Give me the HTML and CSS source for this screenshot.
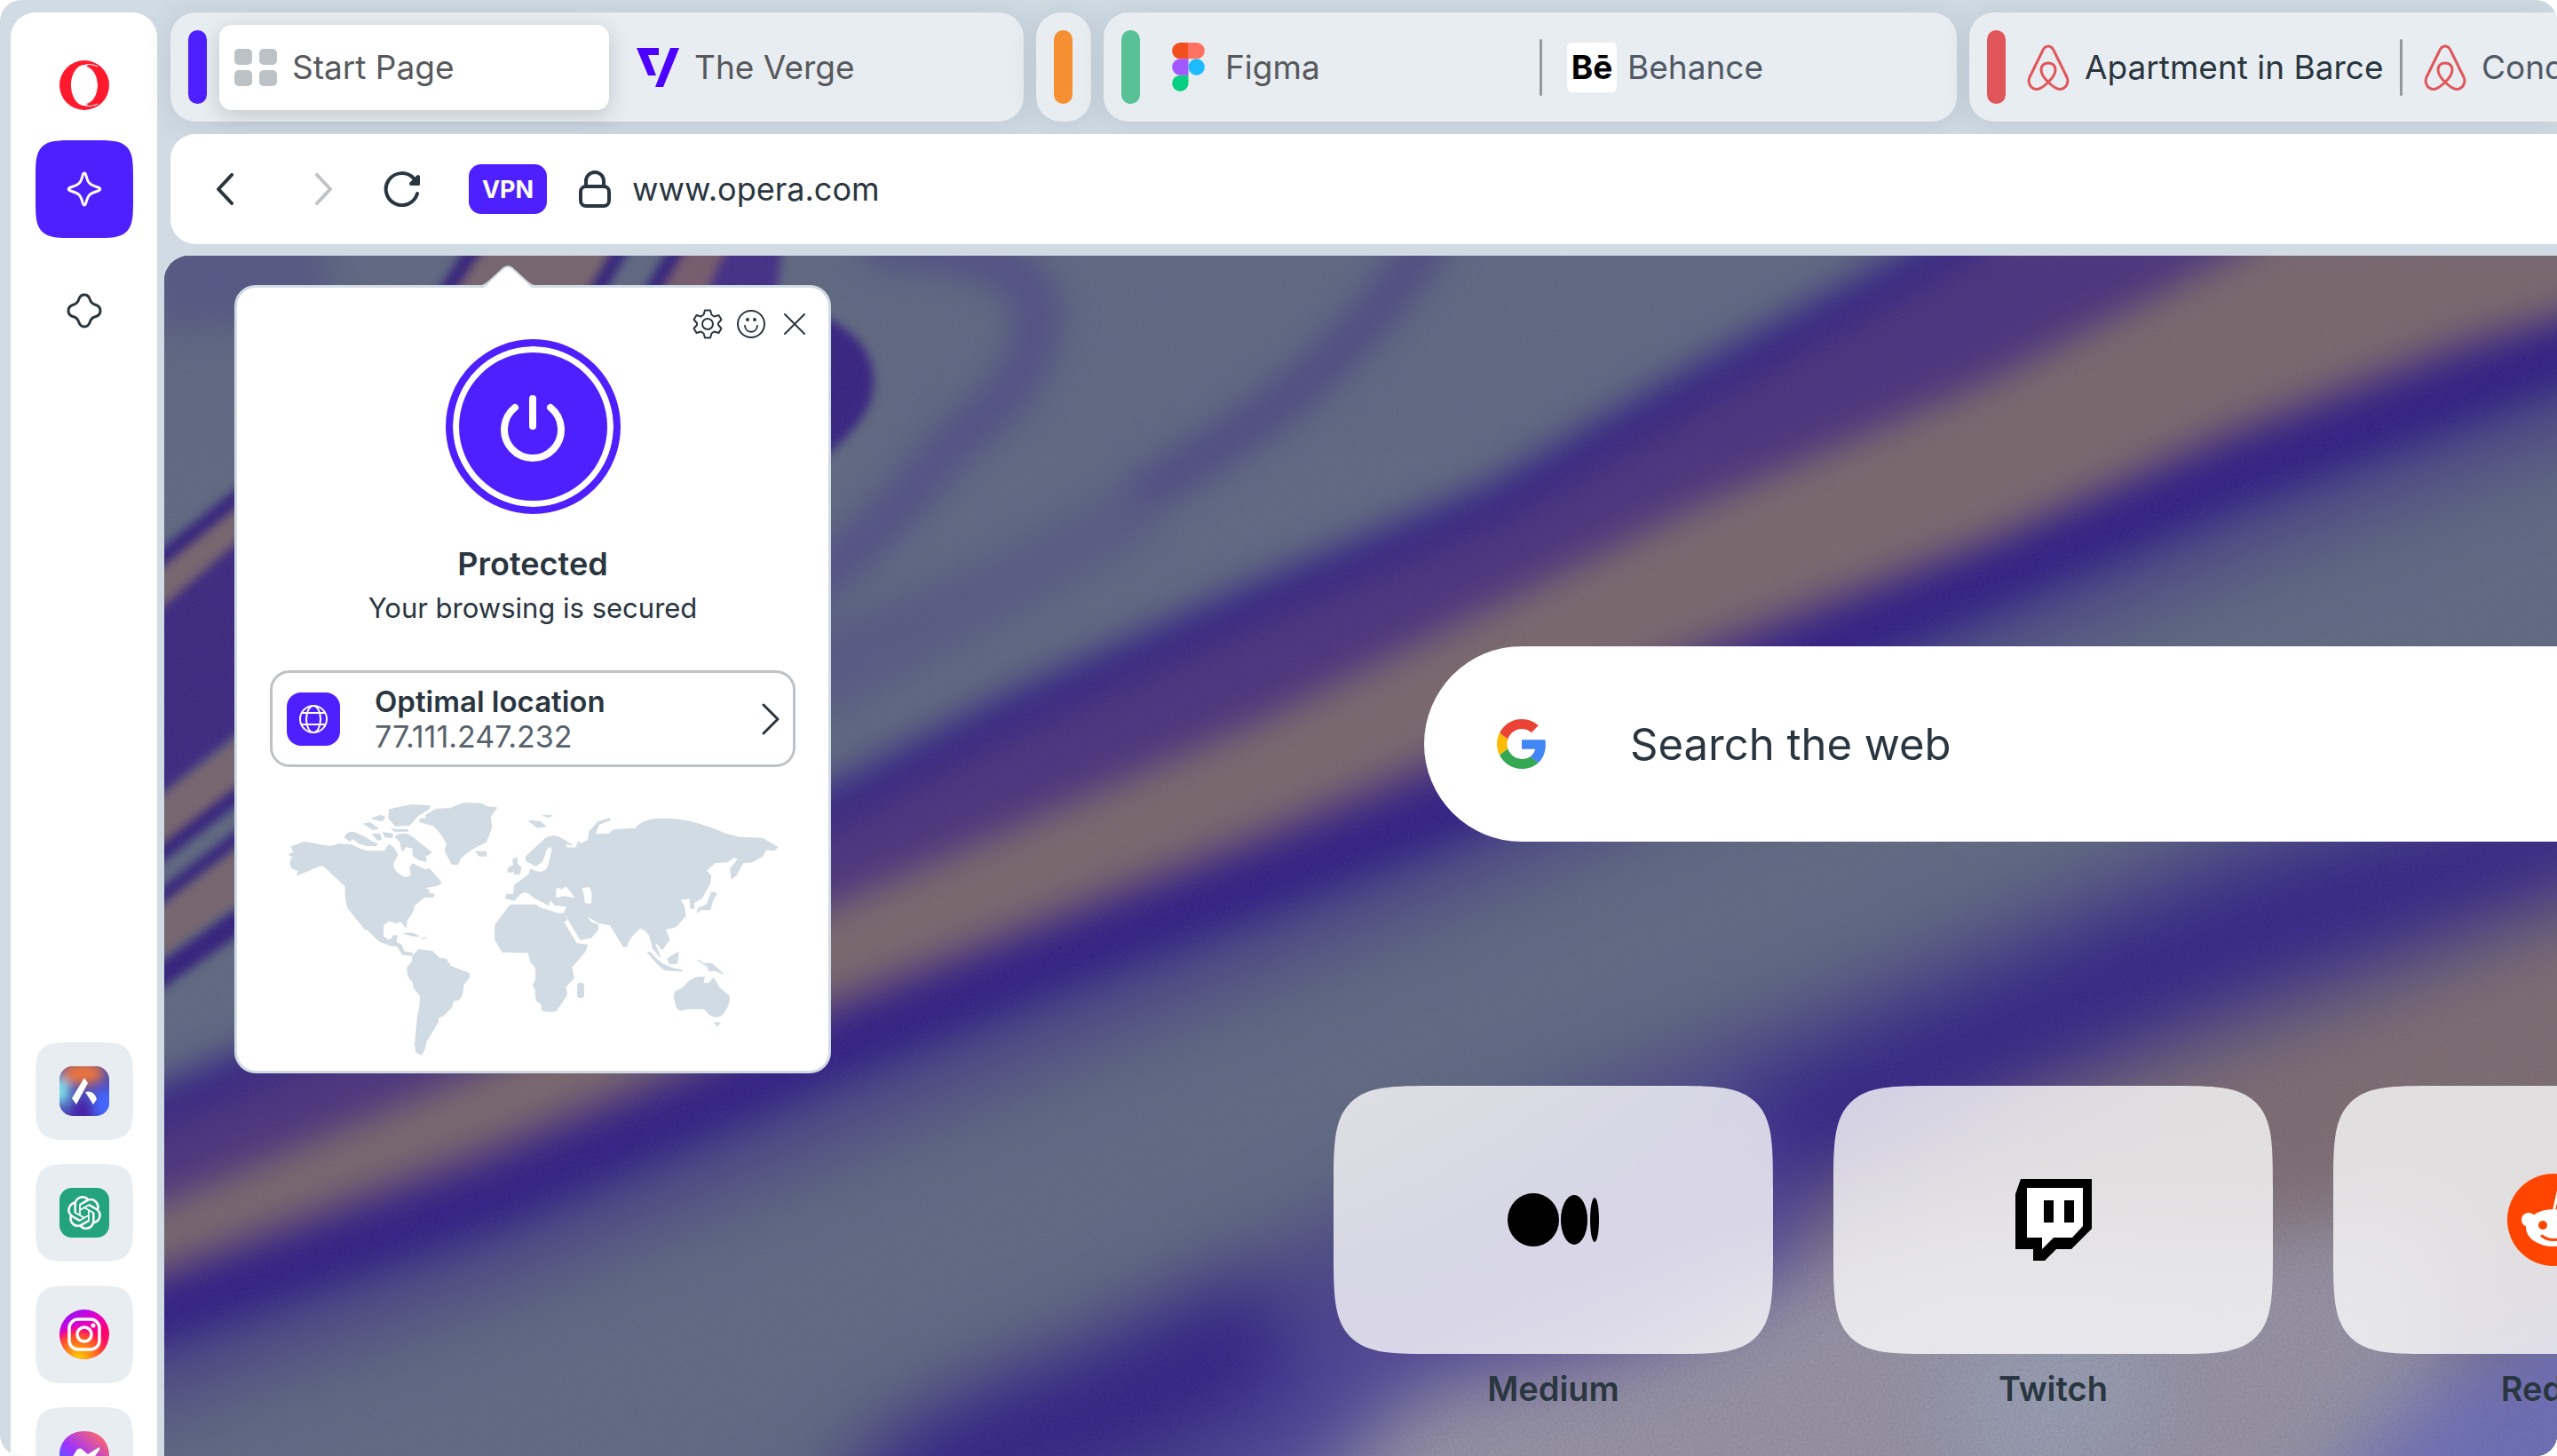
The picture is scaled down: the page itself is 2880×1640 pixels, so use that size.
FILE: index.html
```html
<!DOCTYPE html>
<html lang="en">
<head>
    <meta charset="UTF-8">
    <title>Start Page</title>
    <link rel="stylesheet" href="styles.css">
</head>
<body>
    <div class="window">
        <!-- Sidebar -->
        <nav class="sidebar" aria-label="Sidebar">
            <div class="sidebar-group">
                <button class="side-button" aria-label="Opera menu">
                    <svg width="56" height="56" viewBox="0 0 56 56">
                        <path fill="#ff1b2d" fill-rule="evenodd" d="M28 0a28 28 0 1 0 0 56a28 28 0 1 0 0-56zM28 5c8 0 15 10 15 23s-7 23-15 23s-15-10-15-23s7-23 15-23z"/>
                        <path fill="none" stroke="#fff" stroke-width="1" d="M29 5c6-1 10 0 14 2M29 51c6 1 10 0 14-2"/>
                        <path fill="#ff1b2d" d="M30 7c8-5 20 5 20 21s-12 26-20 21c7-1 13-10 13-21s-6-20-13-21z"/>
                    </svg>
                </button>
                <button class="side-button side-button-active" aria-label="Aria">
                    <svg width="40" height="40" viewBox="0 0 40 40">
                        <path fill="none" stroke="#fff" stroke-width="3" stroke-linejoin="round" d="M20 2c-1 0-1.500 1-2 3c-2 8-4 10-12 12.500c-5 1.500-5 3.500 0 5c8 2.500 10 4.500 12 12.500c1 4 3 4 4 0c2-8 4-10 12-12.500c5-1.500 5-3.500 0-5c-8-2.500-10-4.500-12-12.500c-.5-2-1-3-2-3z"/>
                    </svg>
                </button>
                <button class="side-button" aria-label="Workspace">
                    <svg width="40" height="40" viewBox="0 0 40 40">
                        <path fill="none" stroke="#2a363f" stroke-width="3" stroke-linejoin="round" d="M20 2c3 0 5 2 6 4.500c1 4 3 6 7 7c3 1 5 3.500 5 6.500s-2 5.500-5 6.500c-4 1-6 3-7 7c-1 2.500-3 4.500-6 4.500s-5-2-6-4.500c-1-4-3-6-7-7c-3-1-5-3.500-5-6.500s2-5.500 5-6.500c4-1 6-3 7-7c1-2.500 3-4.500 6-4.500z"/>
                    </svg>
                </button>
            </div>

            <div class="sidebar-group sidebar-apps">
                <button class="side-button side-app" aria-label="Aria chat">
                    <svg width="56" height="56" viewBox="0 0 56 56">
                        <defs>
                            <clipPath id="aria-clip"><rect width="56" height="56" rx="15"/></clipPath>
                            <filter id="aria-blur"><feGaussianBlur stdDeviation="6"/></filter>
                        </defs>
                        <g clip-path="url(#aria-clip)">
                            <rect width="56" height="56" fill="#4b4fb8"/>
                            <g filter="url(#aria-blur)">
                                <ellipse cx="26" cy="8" rx="24" ry="13" fill="#e8733c"/>
                                <ellipse cx="0" cy="28" rx="11" ry="15" fill="#7fe3ea"/>
                                <ellipse cx="52" cy="44" rx="14" ry="18" fill="#4466ff"/>
                                <ellipse cx="26" cy="52" rx="14" ry="14" fill="#4a23a8"/>
                            </g>
                        </g>
                        <path fill="#fff" d="M28 13l4 6l-13 24l-5-7zM29 29c6-2 11 1 13 8l-4 6z"/>
                    </svg>
                </button>
                <button class="side-button side-app" aria-label="ChatGPT">
                    <svg width="56" height="56" viewBox="0 0 56 56">
                        <rect width="56" height="56" rx="14" fill="#24a37f"/>
                        <path fill="#fff" transform="translate(9 9) scale(1.580)" d="M22.2819 9.8211a5.9847 5.9847 0 0 0-.5157-4.9108 6.0462 6.0462 0 0 0-6.5098-2.9A6.0651 6.0651 0 0 0 4.9807 4.1818a5.9847 5.9847 0 0 0-3.9977 2.9 6.0462 6.0462 0 0 0 .7427 7.0966 5.98 5.98 0 0 0 .511 4.9107 6.051 6.051 0 0 0 6.5146 2.9001A5.9847 5.9847 0 0 0 13.2599 24a6.0557 6.0557 0 0 0 5.7718-4.2058 5.9894 5.9894 0 0 0 3.9977-2.9001 6.0557 6.0557 0 0 0-.7475-7.0729zm-9.022 12.6081a4.4755 4.4755 0 0 1-2.8764-1.0408l.1419-.0804 4.7783-2.7582a.7948.7948 0 0 0 .3927-.6813v-6.7369l2.02 1.1686a.071.071 0 0 1 .038.052v5.5826a4.504 4.504 0 0 1-4.4945 4.4944zm-9.6607-4.1254a4.4708 4.4708 0 0 1-.5346-3.0137l.142.0852 4.783 2.7582a.7712.7712 0 0 0 .7806 0l5.8428-3.3685v2.3324a.0804.0804 0 0 1-.0332.0615L9.74 19.9502a4.4992 4.4992 0 0 1-6.1408-1.6464zM2.3408 7.8956a4.485 4.485 0 0 1 2.3655-1.9728V11.6a.7664.7664 0 0 0 .3879.6765l5.8144 3.3543-2.0201 1.1685a.0757.0757 0 0 1-.071 0l-4.8303-2.7865A4.504 4.504 0 0 1 2.3408 7.872zm16.5963 3.8558L13.1038 8.364 15.1192 7.2a.0757.0757 0 0 1 .071 0l4.8303 2.7913a4.4944 4.4944 0 0 1-.6765 8.1042v-5.6772a.79.79 0 0 0-.407-.667zm2.0107-3.0231l-.142-.0852-4.7735-2.7818a.7759.7759 0 0 0-.7854 0L9.409 9.2297V6.8974a.0662.0662 0 0 1 .0284-.0615l4.8303-2.7866a4.4992 4.4992 0 0 1 6.6802 4.66zM8.3065 12.863l-2.02-1.1638a.0804.0804 0 0 1-.038-.0567V6.0742a4.4992 4.4992 0 0 1 7.3757-3.4537l-.142.0805L8.704 5.459a.7948.7948 0 0 0-.3927.6813zm1.0976-2.3654l2.602-1.4998 2.6069 1.4998v2.9994l-2.5974 1.4997-2.6067-1.4997Z"/>
                    </svg>
                </button>
                <button class="side-button side-app" aria-label="Instagram">
                    <svg width="56" height="56" viewBox="0 0 56 56">
                        <defs>
                            <linearGradient id="ig-base" x1="0.200" y1="0" x2="0.800" y2="1">
                                <stop offset="0" stop-color="#8a12ff"/>
                                <stop offset="0.350" stop-color="#e800c8"/>
                                <stop offset="0.650" stop-color="#ff0069"/>
                                <stop offset="1" stop-color="#ff3060"/>
                            </linearGradient>
                            <radialGradient id="ig-glow" cx="0.380" cy="1" r="0.700">
                                <stop offset="0" stop-color="#ffd600"/>
                                <stop offset="0.300" stop-color="#ff9a10"/>
                                <stop offset="0.700" stop-color="#ff4530"/>
                                <stop offset="1" stop-color="#ff0069" stop-opacity="0"/>
                            </radialGradient>
                        </defs>
                        <circle cx="28" cy="28" r="28" fill="url(#ig-base)"/>
                        <circle cx="28" cy="28" r="28" fill="url(#ig-glow)"/>
                        <rect x="11" y="11" width="34" height="34" rx="10" fill="none" stroke="#fff" stroke-width="3.500"/>
                        <circle cx="28" cy="28" r="8" fill="none" stroke="#fff" stroke-width="3.500"/>
                        <circle cx="38" cy="18" r="2.500" fill="#fff"/>
                    </svg>
                </button>
                <button class="side-button side-app" aria-label="Messenger">
                    <svg width="56" height="56" viewBox="0 0 56 56">
                        <defs>
                            <linearGradient id="msg" x1="0.100" y1="0.900" x2="0.850" y2="0.050">
                                <stop offset="0" stop-color="#3a6cff"/>
                                <stop offset="0.450" stop-color="#a033ff"/>
                                <stop offset="1" stop-color="#ff6968"/>
                            </linearGradient>
                        </defs>
                        <path fill="url(#msg)" d="M28 0c16 0 28 11 28 27s-12 26-28 26c-3 0-6 0-8-1l-7 3v-7c-8-5-13-12-13-21c0-16 12-27 28-27z"/>
                        <path fill="#fff" d="M11 35l8-13c2-3 5-3 7-1l6 5l11-7c1-1 3 0 2 2l-9 13c-2 3-5 3-7 1l-6-5z"/>
                    </svg>
                </button>
            </div>
        </nav>

        <div class="main">
            <!-- Tab islands -->
            <div class="tab-strip" role="tablist">
                <div class="island island-wide">
                    <span class="island-bar bar-purple"></span>
                    <button class="tab tab-active" role="tab" aria-selected="true">
                        <svg class="grid-icon" width="48" height="42" viewBox="0 0 48 42" fill="#bdc2c6">
                            <rect width="20" height="18" rx="5"/><rect x="28" width="20" height="18" rx="5"/>
                            <rect y="24" width="20" height="18" rx="5"/><rect x="28" y="24" width="20" height="18" rx="5"/>
                        </svg>
                        Start Page
                    </button>
                    <button class="tab tab-verge" role="tab">
                        <svg width="48" height="44" viewBox="0 0 48 44" fill="#4c00ff">
                            <path d="M0 0h25v8H13l9 23h-9zM38 0h10L30 44h-9z"/>
                        </svg>
                        The Verge
                    </button>
                </div>
                <div class="island island-closed">
                    <span class="island-bar bar-orange"></span>
                </div>
                <div class="island island-wide">
                    <span class="island-bar bar-green"></span>
                    <button class="tab tab-figma" role="tab">
                        <svg width="37" height="55" viewBox="0 0 38 57">
                            <path fill="#1abcfe" d="M19 28.500a9.500 9.500 0 1 1 19 0a9.500 9.500 0 0 1-19 0z"/>
                            <path fill="#0acf83" d="M0 47.500A9.500 9.500 0 0 1 9.500 38H19v9.500a9.500 9.500 0 1 1-19 0z"/>
                            <path fill="#ff7262" d="M19 0v19h9.500a9.500 9.500 0 1 0 0-19H19z"/>
                            <path fill="#f24e1e" d="M0 9.500A9.500 9.500 0 0 0 9.500 19H19V0H9.500A9.500 9.500 0 0 0 0 9.500z"/>
                            <path fill="#a259ff" d="M0 28.500A9.500 9.500 0 0 0 9.500 38H19V19H9.500A9.500 9.500 0 0 0 0 28.500z"/>
                        </svg>
                        Figma
                    </button>
                    <span class="tab-divider"></span>
                    <button class="tab tab-behance" role="tab">
                        <span class="behance-logo">Bē</span>
                        Behance
                    </button>
                </div>
                <div class="island island-last">
                    <span class="island-bar bar-red"></span>
                    <button class="tab tab-airbnb" role="tab">
                        <svg width="48" height="52" viewBox="0 0 48 52" fill="none" stroke="#e0565b" stroke-width="3">
                            <path id="airbnb" d="M24 2c-3 0-5 2-6.500 5.500L3 37C0 44 5 50.500 11 50.500C17 50.500 32 37 32 29C32 23.500 28.500 21 24 21C19.500 21 16 23.500 16 29C16 37 31 50.500 37 50.500C43 50.500 48 44 45 37L30.500 7.500C29 4 27 2 24 2z"/>
                        </svg>
                        Apartment in Barce
                    </button>
                    <span class="tab-divider"></span>
                    <button class="tab tab-condo" role="tab">
                        <svg width="48" height="52" viewBox="0 0 48 52" fill="none" stroke="#e0565b" stroke-width="3">
                            <use href="#airbnb"/>
                        </svg>
                        Condo
                    </button>
                </div>
            </div>

            <!-- Address bar -->
            <div class="toolbar">
                <button class="nav-button" aria-label="Back">
                    <svg width="20" height="36" viewBox="0 0 20 36"><path d="M18 2L3 18l15 16"/></svg>
                </button>
                <button class="nav-button nav-forward" aria-label="Forward">
                    <svg width="20" height="36" viewBox="0 0 20 36"><path d="M2 2l15 16L2 34"/></svg>
                </button>
                <button class="nav-button nav-reload" aria-label="Reload">
                    <svg width="42" height="40" viewBox="0 0 42 40">
                        <path d="M38 25A18 18 0 1 1 34 8l5 6"/>
                        <path fill="#2a363f" d="M39 6v8h-8z"/>
                    </svg>
                </button>
                <button class="vpn-button">VPN</button>
                <svg class="lock-icon" width="36" height="42" viewBox="0 0 36 42">
                    <rect x="2" y="18" width="32" height="22" rx="6"/>
                    <path d="M8 18v-6a10 10 0 0 1 20 0v6"/>
                </svg>
                <input class="address" type="text" value="www.opera.com" aria-label="Address">
            </div>

            <!-- Start page -->
            <main class="content">
                <svg class="wallpaper" viewBox="100 157 1468 736" preserveAspectRatio="xMinYMin slice" aria-hidden="true">
                    <defs>
                        <filter id="soft" filterUnits="userSpaceOnUse" x="-50" y="0" width="1800" height="1050"><feGaussianBlur stdDeviation="11"/></filter>
                        <filter id="softer" filterUnits="userSpaceOnUse" x="-50" y="0" width="1800" height="1050"><feGaussianBlur stdDeviation="24"/></filter>
                        <filter id="tight" filterUnits="userSpaceOnUse" x="-50" y="0" width="1800" height="1050"><feGaussianBlur stdDeviation="3"/></filter>
                        <filter id="grain" filterUnits="userSpaceOnUse" x="100" y="157" width="1468" height="740">
                            <feTurbulence type="fractalNoise" baseFrequency="0.700" numOctaves="2"/>
                            <feColorMatrix type="matrix" values="0 0 0 0 0.350  0 0 0 0 0.350  0 0 0 0 0.400  2 0 0 0 -0.500"/>
                        </filter>
                    </defs>
                    <rect x="0" y="100" width="1700" height="900" fill="#626c84"/>

                    <!-- Faint swirls -->
                    <g fill="none" filter="url(#soft)">
                        <path stroke="#4c4788" stroke-width="22" d="M880 140C855 180 830 210 791 242S680 315 619 347S530 391 480 415"/>
                        <path stroke="#504e8a" stroke-width="24" d="M530 150C600 150 645 165 635 205S600 255 582 274S540 330 480 370"/>
                        <path stroke="#595d86" stroke-width="40" d="M490 430C560 390 620 360 700 310"/>
                        <path stroke="#575a86" stroke-width="60" d="M90 175L200 165"/>
                    </g>

                    <!-- Streaks around the popup -->
                    <g fill="none" filter="url(#tight)">
                        <path fill="#3a2585" d="M480 185C515 195 534 210 535 232S520 270 480 300z"/>
                        <path fill="#7b6871" d="M290 150H384L366 185H268z"/>
                        <path fill="#626c84" d="M384 150H416L400 185H364z"/>
                        <path fill="#7b5f70" d="M412 150H448L440 185H396z"/>
                        <path fill="#46308a" d="M446 150H479L475 185H430z"/>
                        <path stroke="#35227f" stroke-width="9" d="M292 150l-24 36M382 150l-20 34M416 150l-20 34"/>
                        <path fill="#7b6871" d="M90 350L150 300V332L90 382z"/>
                        <path fill="#3f2a83" d="M90 380L150 328V446L90 494z"/>
                        <path fill="#7b6871" d="M90 494L150 450V482L90 524z"/>
                        <path stroke="#35227f" stroke-width="9" d="M90 349L150 301M90 530L150 484"/>
                        <path stroke="#35227f" stroke-width="8" d="M90 556L150 510"/>
                        <path fill="#7b6871" d="M90 562L150 516V550L90 592z"/>
                        <path stroke="#35227f" stroke-width="14" d="M90 604L150 562"/>
                    </g>

                    <!-- Main diagonal band -->
                    <path fill="none" stroke="#4a4588" stroke-width="76" filter="url(#softer)" d="M60 836L300 752L513 664L700 588L872 518L1139 402L1364 308L1620 214"/>
                    <g fill="none" filter="url(#soft)">
                        <path fill="#4d3580" d="M60 688L300 586L513 488L619 432L775 363L914 305L1036 234L1210 140H1620V200L1504 242L1364 294L1139 389L872 503L642 590L513 642L300 733L60 820z"/>
                        <path stroke="#321f88" stroke-width="20" d="M60 693L300 590L513 491L619 436L775 366L914 308L1036 238L1215 140"/>
                        <path fill="#7d6a70" d="M60 754L300 654L513 554L777 440L1036 312L1223 232L1400 140H1640V174L1504 210L1364 264L1223 328L1036 398L777 508L513 612L300 702L60 792z"/>
                        <path stroke="#321f88" stroke-width="34" d="M60 820L300 737L513 645L642 593L777 542L872 505L1139 391L1364 296L1504 244L1640 192"/>
                    </g>

                    <!-- Lower right band -->
                    <g fill="none" filter="url(#softer)">
                        <path fill="#4c4788" d="M440 960L600 850L818 745L946 680L1109 615L1250 555L1400 490H1640V960H440z"/>
                        <path fill="#7f6e74" d="M1105 745L1210 695L1353 640L1454 606L1640 530V960H1000z"/>
                        <path fill="#4f4498" d="M700 940L830 790L1000 710L1110 660V850L800 960z"/>
                        <path fill="#9793a5" d="M770 950L870 850L1010 820L1105 775L1200 745L1350 760L1500 740L1500 960z"/>
                        <path fill="#989fb4" d="M1190 845L1290 800L1320 870L1230 920z"/>
                        <path fill="#6f70b8" d="M1430 910L1510 830L1640 770V980H1420z"/>
                        <path stroke="#321f88" stroke-width="70" d="M540 925L608 886L680 862L780 812"/>
                        <path stroke="#321f88" stroke-width="56" d="M1080 700L1210 642L1305 600L1386 569L1562 512L1660 470"/>
                    </g>
                    <rect class="grain" x="100" y="157" width="1468" height="740" filter="url(#grain)"/>
                </svg>

                <div class="start-page">
                    <form class="search" role="search">
                        <svg width="56" height="56" viewBox="0 0 48 48">
                            <path fill="#EA4335" d="M24 9.5c3.54 0 6.71 1.22 9.21 3.6l6.85-6.85C35.9 2.38 30.47 0 24 0 14.62 0 6.51 5.38 2.56 13.22l7.98 6.19C12.43 13.72 17.74 9.5 24 9.5z"/>
                            <path fill="#4285F4" d="M46.98 24.55c0-1.57-.15-3.09-.38-4.55H24v9.02h12.94c-.58 2.96-2.26 5.48-4.78 7.18l7.73 6c4.51-4.18 7.09-10.36 7.09-17.65z"/>
                            <path fill="#FBBC05" d="M10.53 28.59c-.48-1.45-.76-2.99-.76-4.59s.27-3.14.76-4.59l-7.98-6.19C.92 16.46 0 20.12 0 24c0 3.88.92 7.54 2.56 10.78l7.97-6.19z"/>
                            <path fill="#34A853" d="M24 48c6.48 0 11.93-2.13 15.89-5.81l-7.73-6c-2.15 1.45-4.92 2.3-8.16 2.3-6.26 0-11.57-4.22-13.47-9.91l-7.98 6.19C6.51 42.62 14.62 48 24 48z"/>
                        </svg>
                        <input class="search-input" type="text" placeholder="Search the web" aria-label="Search the web">
                    </form>

                    <div class="speed-dial">
                        <a class="dial" href="#medium">
                            <span class="dial-tile">
                                <svg width="104" height="60" viewBox="0 0 104 60">
                                    <ellipse cx="29" cy="30" rx="29" ry="30"/><ellipse cx="75" cy="30" rx="15" ry="28"/><ellipse cx="98" cy="30" rx="5" ry="25"/>
                                </svg>
                            </span>
                            Medium
                        </a>
                        <a class="dial" href="#twitch">
                            <span class="dial-tile">
                                <svg width="86" height="92" viewBox="0 0 86 92">
                                    <path d="M6 0h80v56L63 79H46L33 92H20V79H0V17z"/>
                                    <path fill="#fff" d="M13 10h63v43L64 66H43L30 79V66H13z"/>
                                    <path d="M32 24h11v25H32zM55 24h11v25H55z"/>
                                </svg>
                            </span>
                            Twitch
                        </a>
                        <a class="dial" href="#reddit">
                            <span class="dial-tile">
                                <svg width="104" height="104" viewBox="0 0 104 104">
                                    <circle cx="52" cy="52" r="52" fill="#ff4500"/>
                                    <path d="M52 44l5-23l15 4" fill="none" stroke="#fff" stroke-width="3"/>
                                    <g fill="#fff">
                                        <circle cx="74" cy="26" r="5"/><circle cx="24" cy="52" r="8"/><circle cx="80" cy="52" r="8"/>
                                        <ellipse cx="52" cy="61" rx="31" ry="21"/>
                                    </g>
                                    <circle cx="40" cy="58" r="5" fill="#ff4500"/><circle cx="64" cy="58" r="5" fill="#ff4500"/>
                                    <path d="M39 70c7 6 19 6 26 0" fill="none" stroke="#ff4500" stroke-width="3" stroke-linecap="round"/>
                                </svg>
                            </span>
                            Reddit
                        </a>
                    </div>
                </div>

                <!-- VPN popup -->
                <section class="vpn-popup" aria-label="VPN">
                    <svg class="popup-arrow" width="60" height="26" viewBox="0 0 60 26">
                        <path fill="#fff" d="M1 26C5 24 7 21 9 18L23 5C28 0 32 0 37 5L51 18C53 21 55 24 59 26z"/>
                        <path fill="none" stroke="#d0dbe3" stroke-width="2" d="M1 23C5 22 7 20 9 18L23 5C28 0 32 0 37 5L51 18C53 20 55 22 59 23"/>
                    </svg>
                    <div class="popup-actions">
                        <button class="icon-button" aria-label="Settings">
                            <svg width="34" height="34" viewBox="0 0 34 34">
                                <circle cx="17" cy="17" r="6"/>
                                <path d="M14 1.500h6l1.500 5l3 2l5-1.500l3 5l-3.500 4v2l3.500 4l-3 5l-5-1.500l-3 2l-1.500 5h-6l-1.500-5l-3-2l-5 1.500l-3-5l3.500-4v-2l-3.500-4l3-5l5 1.500l3-2z"/>
                            </svg>
                        </button>
                        <button class="icon-button" aria-label="Feedback">
                            <svg width="34" height="34" viewBox="0 0 34 34">
                                <circle cx="17" cy="17" r="15"/>
                                <path d="M10 19c1 9 13 9 14 0"/>
                                <circle class="eye" cx="13" cy="12" r="2"/><circle class="eye" cx="21" cy="12" r="2"/>
                            </svg>
                        </button>
                        <button class="icon-button" aria-label="Close">
                            <svg width="34" height="34" viewBox="0 0 34 34"><path d="M6 6l22 22M28 6L6 28"/></svg>
                        </button>
                    </div>

                    <button class="power-button" aria-label="Turn VPN off">
                        <svg width="76" height="80" viewBox="0 0 76 80">
                            <path d="M18 18A32 32 0 1 0 58 18M38 8v31"/>
                        </svg>
                    </button>
                    <h2>Protected</h2>
                    <p class="status">Your browsing is secured</p>

                    <button class="location">
                        <span class="location-icon">
                            <svg width="34" height="34" viewBox="0 0 34 34">
                                <circle cx="17" cy="17" r="15"/><ellipse cx="17" cy="17" rx="8" ry="15"/>
                                <path d="M4 10h26M4 23h26"/>
                            </svg>
                        </span>
                        <span class="location-text">
                            <strong>Optimal location</strong>
                            <span>77.111.247.232</span>
                        </span>
                        <svg class="location-chevron" width="20" height="36" viewBox="0 0 20 36"><path d="M2 2l16 16L2 34"/></svg>
                    </button>

                    <svg class="world-map" viewBox="33 163 553 287" aria-label="World map">
                        <g transform="scale(0.3954 0.3333)" fill="#d0dbe3" stroke="#d0dbe3" stroke-width="4" stroke-linejoin="round">
                            <!-- North America -->
                            <path d="M95 642L130 626L205 641L230 633L265 636Q290 650 310 657H360L372 635Q385 640 396 668L382 700Q385 730 418 747L437 740L432 712L440 699L475 720L487 717L520 762L512 771L472 780L484 787L486 798L500 803L497 810L472 811L443 840Q441 865 422 888L420 912L407 893L392 898L372 890L355 905L354 945L368 956L378 955L385 942L395 942L391 964L406 972L414 996L438 1001L436 1008L412 1006L397 978L375 974L345 960L310 920L305 921L256 848Q247 815 249 775L187 706L176 704L112 736L115 722L97 714Q88 695 95 682L102 678L88 668L102 660z"/>
                            <path d="M247 610Q252 588 275 594L300 607L322 624L338 632L334 638L305 636L286 628L268 612L260 622z"/>
                            <path d="M302 564L318 560L340 580L325 583zM324 546L348 535L360 542L352 553zM325 598L345 598L350 616L340 618zM356 594L382 598L380 610L362 608zM380 580L388 584H425V588H388z"/>
                            <path d="M374 516L436 500L488 504L486 512L452 538L430 568L390 570L372 545z"/>
                            <path d="M390 606Q410 592 432 604L492 660L484 668L475 672L478 690L460 686L442 672L440 645L420 640L410 655L405 625z"/>
                            <path d="M460 548L480 545L478 535L508 514L548 512L585 494L635 496L652 507L678 510L660 540L664 575L648 626Q605 645 575 680L568 700H552L532 655L538 632Q520 590 500 570L462 558z"/>
                            <path d="M620 658H648V672H630zM416 935Q435 928 456 944L440 942zM466 950L478 950z"/>
                            <!-- South America -->
                            <path d="M440 1010L457 990L495 995L513 1017L535 1022L546 1045L600 1070V1082L583 1108Q584 1140 570 1158L554 1163L550 1183L528 1210L513 1217L510 1236L478 1298L471 1330L463 1344L450 1334L447 1310L454 1220L461 1180L462 1145L444 1118L441 1097Q424 1085 425 1050L440 1028z"/>
                            <!-- Europe and Asia -->
                            <path d="M705 815L708 802H728L730 772L772 735L775 718L790 725Q820 735 828 700L838 650L832 638L820 650L808 690L790 706L772 694Q760 690 763 675L820 612Q840 600 860 612L892 634L872 630L878 646L905 645L912 625L920 632L940 620L944 590L968 558L1000 546L1001 551L970 565L958 600L1000 598L1012 585L1074 580Q1090 555 1130 548Q1220 540 1330 598L1370 610L1435 613L1478 642L1470 652L1445 650L1436 672L1406 692L1380 695L1360 738L1348 748L1346 715L1368 682L1355 676L1335 692L1300 695L1275 722L1288 740L1286 765L1262 815L1240 830V850L1232 848L1230 815L1200 820L1212 842L1216 875L1188 912L1158 920L1170 955L1150 988L1132 962L1130 975L1144 1012L1125 985L1115 942L1105 925L1088 915Q1055 945 1048 978L1040 978L1003 905L970 898L930 870L948 898L966 905V922L948 948L918 955L872 865L880 842L845 838L832 818L826 838L785 812Q765 785 745 800L728 822z"/>
                            <path fill="#fff" stroke="#fff" d="M850 785L858 782L862 790L876 778L898 812L870 805L850 812zM924 782L942 780L948 800L946 832L932 830L930 808z"/>
                            <path d="M712 714L725 706L724 726H712zM726 684L736 678V700L748 712L744 732L730 734zM772 554L800 556L818 572L795 576zM812 535L836 537L826 541z"/>
                            <path d="M1292 795L1305 800L1294 820L1286 854L1264 852L1250 862L1256 848L1278 838z"/>
                            <path d="M1110 998L1118 1000Q1150 1052 1206 1058V1061L1160 1058Q1140 1045 1110 998zM1166 1020L1196 998L1192 1035L1172 1036zM1253 1025L1268 1036L1290 1036L1323 1070L1298 1058L1285 1062L1280 1045z"/>
                            <!-- Africa and Madagascar -->
                            <path d="M718 838H790L800 848L850 866L870 868L905 968L936 974L930 995L892 1048L898 1085L874 1115L878 1142L848 1195L830 1198L810 1195L806 1172L792 1160L790 1125L783 1108L792 1090L790 1048L776 1030L770 998L695 996L675 955V908z"/>
                            <path fill="none" stroke="#fff" stroke-width="12" d="M876 892L912 964"/>
                            <rect x="910" y="1102" width="16" height="48" rx="8"/>
                            <!-- Australia -->
                            <path d="M1185 1150L1188 1132L1208 1120L1232 1092Q1250 1080 1270 1083L1266 1102L1282 1104L1297 1086L1312 1118L1340 1145Q1344 1175 1320 1210Q1300 1222 1286 1208L1270 1188H1230L1202 1194L1193 1185zM1301 1236L1315 1237L1307 1246z"/>
                        </g>
                    </svg>
                </section>
            </main>
        </div>
    </div>
</body>
</html>
```
FILE: styles.css
```css
/* General Styling */
* {
    box-sizing: border-box;
}

body {
    margin: 0;
    background-color: #fff;
    color: #2a363f;
    font-family: Inter, "Liberation Sans", sans-serif;
}

button {
    border: none;
    background: none;
    padding: 0;
    margin: 0;
    color: inherit;
    font-family: inherit;
    cursor: pointer;
}

svg {
    display: block;
    flex: none;
}

.window {
    display: flex;
    height: 100vh;
    overflow: hidden;
    border-radius: 24px;
    background: #d0dbe3;
}

/* Sidebar */
.sidebar {
    display: flex;
    flex-direction: column;
    justify-content: space-between;
    flex: none;
    width: 165px;
    margin: 14px 0 0 12px;
    padding-top: 27px;
    border-radius: 28px 28px 0 0;
    background: #fff;
}

.sidebar-group {
    display: flex;
    flex-direction: column;
    align-items: center;
    gap: 27px;
}

.sidebar-group:first-child {
    gap: 7px;
}

.side-button {
    display: flex;
    align-items: center;
    justify-content: center;
    width: 110px;
    height: 110px;
    border-radius: 32px;
}

.side-button-active {
    background: #4f20ff;
    margin-bottom: 20px;
}

.side-app {
    background: #e8edf1;
}

/* The app list runs past the bottom of the window */
.sidebar-apps {
    margin-bottom: -55px;
}

.main {
    display: flex;
    flex-direction: column;
    flex: 1;
    min-width: 0;
    padding-top: 14px;
}

/* Tab islands */
.tab-strip {
    display: flex;
    gap: 14px;
    height: 123px;
    margin-left: 15px;
}

.island {
    display: flex;
    align-items: center;
    flex: none;
    padding-left: 20px;
    border-radius: 28px;
    background: #e8edf1;
    box-shadow: 0 2px 32px rgba(80, 100, 125, 0.16);
}

.island-wide {
    width: 961px;
}

.island-closed {
    width: 62px;
}

.island-last {
    flex: 1;
    min-width: 0;
    border-radius: 28px 0 0 28px;
}

.island-bar {
    flex: none;
    width: 21px;
    height: 83px;
    border-radius: 11px;
}

.bar-purple {
    background: #4f20ff;
}

.bar-orange {
    background: #f59032;
}

.bar-green {
    background: #58c196;
}

.bar-red {
    background: #e0565b;
}

.tab {
    display: flex;
    align-items: center;
    flex: none;
    gap: 17px;
    height: 96px;
    font-size: 37px;
    color: #57595c;
    white-space: nowrap;
}

.tab-active {
    width: 439px;
    margin-left: 14px;
    padding-left: 17px;
    border-radius: 14px;
    background: #fff;
    box-shadow: 0 6px 24px rgba(40, 50, 60, 0.2);
}

.tab-verge {
    margin-left: 31px;
}

.tab-figma {
    width: 414px;
    margin-left: 36px;
    gap: 23px;
}

.tab-behance {
    margin-left: 28px;
    gap: 12px;
    color: #505a66;
}

.tab-airbnb {
    width: 420px;
    margin-left: 24px;
    color: #2a363f;
}

.tab-condo {
    margin-left: 24px;
    color: #505a66;
}

.tab-divider {
    flex: none;
    width: 3px;
    height: 64px;
    border-radius: 2px;
    background: #91989e;
}

.behance-logo {
    width: 56px;
    height: 56px;
    border-radius: 6px;
    background: #fff;
    color: #000;
    font-size: 37px;
    font-weight: 700;
    line-height: 56px;
    text-align: center;
}

/* Address bar */
.toolbar {
    display: flex;
    align-items: center;
    flex: none;
    height: 124px;
    margin: 14px 0 13px 15px;
    padding-left: 51px;
    border-radius: 28px 0 0 28px;
    background: #fff;
}

.toolbar svg {
    fill: none;
    stroke: #2a363f;
    stroke-width: 4;
    stroke-linecap: round;
    stroke-linejoin: round;
}

.nav-forward {
    margin-left: 92px;
}

.toolbar .nav-forward svg {
    stroke: #bfc3c6;
}

.nav-reload {
    margin-left: 57px;
}

.vpn-button {
    width: 88px;
    height: 56px;
    margin-left: 54px;
    border-radius: 14px;
    background: #4f20ff;
    color: #fff;
    font-size: 27px;
    font-weight: 700;
}

.lock-icon {
    margin-left: 36px;
}

.address {
    flex: 1;
    min-width: 0;
    height: 80px;
    margin-left: 24px;
    padding: 0;
    border: none;
    outline: none;
    background: none;
    color: #2a363f;
    font-family: inherit;
    font-size: 36px;
}

/* Start page */
.content {
    position: relative;
    flex: 1;
    margin-left: 8px;
    overflow: hidden;
    border-top-left-radius: 28px;
    background: #626c84;
}

.wallpaper {
    position: absolute;
    inset: 0;
    width: 100%;
    height: 100%;
}

.wallpaper filter * {
    color-interpolation-filters: sRGB;
}

.grain {
    opacity: 0.16;
}

.start-page {
    position: relative;
    padding-top: 440px;
    padding-left: 1317px;
}

.search {
    display: flex;
    align-items: center;
    height: 220px;
    margin-left: 102px;
    padding-left: 82px;
    border-radius: 110px 0 0 110px;
    background: #fff;
}

.search-input {
    flex: 1;
    min-width: 0;
    height: 120px;
    margin-left: 94px;
    padding: 0;
    border: none;
    outline: none;
    background: none;
    font-family: inherit;
    font-size: 49px;
}

.search-input::placeholder {
    color: #2a363f;
    opacity: 1;
}

.speed-dial {
    display: flex;
    gap: 68px;
    margin-top: 275px;
}

.dial {
    flex: none;
    width: 495px;
    color: #2a363f;
    font-size: 38px;
    font-weight: 600;
    line-height: 48px;
    text-align: center;
    text-decoration: none;
}

.dial-tile {
    display: flex;
    align-items: center;
    justify-content: center;
    height: 302px;
    margin-bottom: 15px;
    border-radius: 84px;
    background: rgba(255, 255, 255, 0.78);
    backdrop-filter: blur(40px);
}

/* Smoother corners where the browser has them */
@supports (corner-shape: squircle) {
    .dial-tile {
        border-radius: 120px;
        corner-shape: squircle;
    }

    .side-button {
        border-radius: 46px;
        corner-shape: squircle;
    }
}

/* VPN popup */
.vpn-popup {
    position: absolute;
    top: 33px;
    left: 79px;
    display: flex;
    flex-direction: column;
    align-items: center;
    width: 672px;
    padding-bottom: 16px;
    border: 3px solid #d0dbe3;
    border-radius: 24px;
    background: #fff;
}

.popup-arrow {
    position: absolute;
    top: -25px;
    left: 275px;
}

.popup-actions {
    display: flex;
    align-self: flex-end;
    gap: 15px;
    margin: 24px 21px 0 0;
}

.icon-button svg,
.location svg {
    fill: none;
    stroke: #2a363f;
    stroke-width: 2;
    stroke-linecap: round;
    stroke-linejoin: round;
}

.icon-button .eye {
    fill: #2a363f;
    stroke: none;
}

.power-button {
    display: flex;
    align-items: center;
    justify-content: center;
    width: 197px;
    height: 197px;
    border: 8px solid #4f20ff;
    border-radius: 50%;
    background: #4f20ff;
    box-shadow: inset 0 0 0 7px #fff;
}

.power-button svg {
    fill: none;
    stroke: #fff;
    stroke-width: 8;
    stroke-linecap: round;
}

.vpn-popup h2 {
    margin: 33px 0 0;
    font-size: 36px;
    font-weight: 600;
    line-height: 46px;
}

.status {
    margin: 4px 0 0;
    font-size: 31px;
    line-height: 46px;
}

.location {
    display: flex;
    align-items: center;
    width: 592px;
    height: 109px;
    margin-top: 47px;
    padding: 0 15px 0 16px;
    border: 3px solid #bdc2c6;
    border-radius: 22px;
    text-align: left;
}

.location-icon {
    display: flex;
    align-items: center;
    justify-content: center;
    width: 60px;
    height: 60px;
    border-radius: 16px;
    background: #4f20ff;
}

.location .location-icon svg {
    stroke: #fff;
}

.location .location-chevron {
    stroke-width: 3;
}

.location-text {
    display: flex;
    flex-direction: column;
    flex: 1;
    margin-left: 39px;
    color: #57636c;
    font-size: 34px;
    line-height: 40px;
}

.location-text strong {
    color: #2a363f;
    font-size: 33px;
    font-weight: 600;
}

.world-map {
    width: 553px;
    height: 287px;
    margin-top: 39px;
}
```
